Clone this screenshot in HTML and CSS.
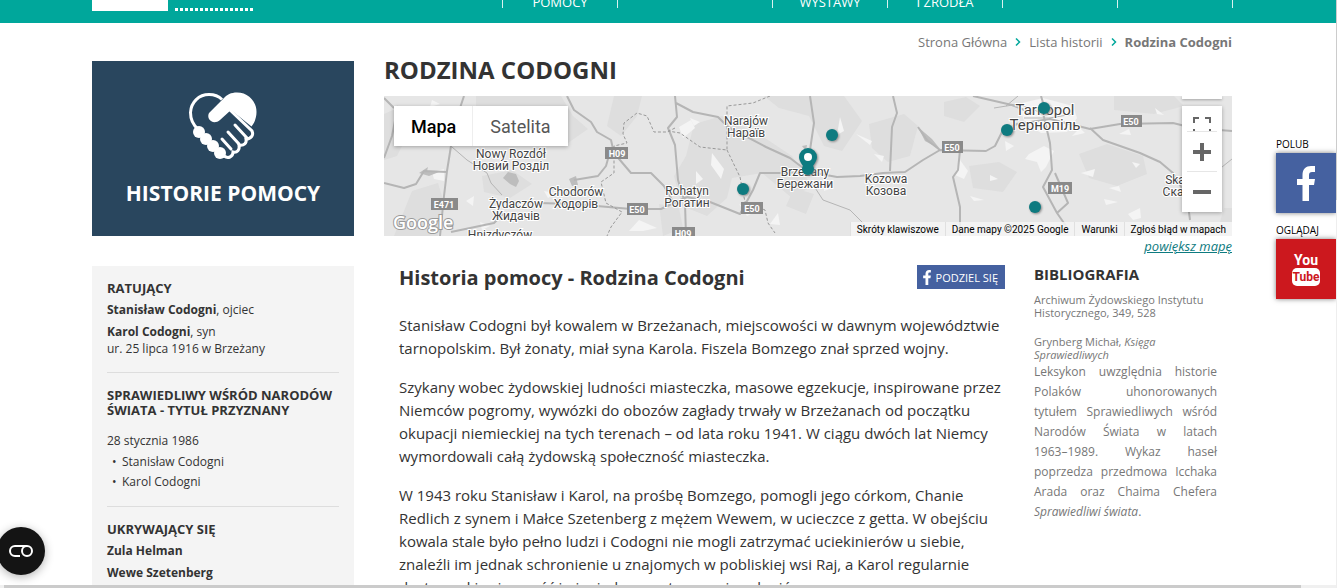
FILE: index.html
```html
<!DOCTYPE html>
<html lang="pl">
<head>
<meta charset="utf-8">
<title>Rodzina Codogni</title>
<link rel="stylesheet" href="styles.css">
</head>
<body>
<header class="topbar">
  <a class="logo" href="#" aria-label="Strona Główna"><span class="logo-box"></span><span class="logo-dots"></span></a>
  <nav class="menu">
    <a href="#">POMOCY</a>
    <a class="wide" href="#"></a>
    <a href="#">WYSTAWY</a>
    <a href="#">I ŹRÓDŁA</a>
    <a href="#"></a>
    <a href="#"></a>
  </nav>
</header>

<main class="page">
  <nav class="breadcrumb">
    <a href="#">Strona Główna</a>
    <svg class="chevron" viewBox="0 0 6 8"><path d="M1 0.5 4.5 4 1 7.5"/></svg>
    <a href="#">Lista historii</a>
    <svg class="chevron" viewBox="0 0 6 8"><path d="M1 0.5 4.5 4 1 7.5"/></svg>
    <strong>Rodzina Codogni</strong>
  </nav>

  <div class="columns">
    <aside class="side">
      <a class="tile" href="#">
        <svg class="hands" viewBox="0 0 70 68">
          <path class="outline" d="M10 37C4 32 2.500 26 2.500 20.500 3 10 11 2.500 21 2.500c6 0 10 2 13 5"/>
          <path class="fill" d="M21 21 35 7C39 2.500 43 .5 49 .5 60 .5 68.500 9 68.500 20c0 5-1.500 10-5 14.500L43 18l-11 10c-4 3.500-9 2.500-11-1-1-2-1-4 0-6z"/>
          <circle class="fill" cx="11" cy="40" r="6"/><circle class="fill" cx="18" cy="47" r="6"/><circle class="fill" cx="25" cy="54" r="6"/><circle class="fill" cx="32" cy="61" r="6"/>
          <path class="outline" d="m36 64c4 3 9 1 9-4 4 1 7-2 6-7 5 1 8-2 7-6 5 0 8-4 6-8L42 18"/>
          <path class="fingers" d="m34 47 9 10M40 40l11 12M47 33l12 13"/>
        </svg>
        <span>HISTORIE POMOCY</span>
      </a>
      <div class="facts">
        <section>
          <h2>RATUJĄCY</h2>
          <p><b>Stanisław Codogni</b>, ojciec</p>
          <p><b>Karol Codogni</b>, syn<br>ur. 25 lipca 1916 w Brzeżany</p>
        </section>
        <section>
          <h2>SPRAWIEDLIWY WŚRÓD NARODÓW ŚWIATA - TYTUŁ PRZYZNANY</h2>
          <p class="date">28 stycznia 1986</p>
          <ul><li>Stanisław Codogni</li><li>Karol Codogni</li></ul>
        </section>
        <section>
          <h2>UKRYWAJĄCY SIĘ</h2>
          <p><b>Zula Helman</b></p>
          <p><b>Wewe Szetenberg</b></p>
        </section>
      </div>
    </aside>

    <div class="content">
      <h1>RODZINA CODOGNI</h1>
      <div class="map">
        <svg class="map-canvas" viewBox="0 0 848 140" preserveAspectRatio="xMidYMin slice">
          <rect class="land" width="848" height="140"/>
          <g class="shade">
            <path d="M92 0h85l12 20 15 13-20 14-30-10-40 8-22-20z"/>
            <path d="M0 18 18 10l10 20-15 30-13 4zM28 95l26-8 6 20-6 33H10l10-25z"/>
            <path d="M230 0h28l-5 20-16 20-14-10z"/>
            <path d="m310 28 28-8 40 20 30 20 20 30-20 12-30-25-30 5-5 20-20 18-25-10-8-30 12-20z"/>
            <path d="m380 0h80l18 25-20 30-18-5-15-30-30-8z"/>
            <path d="m485 28 35-10 14 12-8 30-22 6-16-14zM585 70l30-4 18 10-14 20-30-4z"/>
            <path d="m695 58 28-10 36 12 4 18-30 12-28-8zM560 6l22-5 14 9-16 16-20-6z"/>
            <path d="m730 0h60l10 10-30 8-40-4zM98 80l30-6 20 14-22 14-26-6zM840 112h8v14h-12z"/>
            <path d="m410 92 20 6-8 20-20-8zM275 108l20 4 4 20-20 8z"/>
          </g>
          <g class="clear">
            <path d="m48 76 12-3v12l-10-2zM48 4l8 4-10 3zM82 105l8-5-1 10zM96 126l10 4-8 4zM150 65l-8 6 10 1zM160 95l12 2-8 5zM245 135l10-11 18 8-14 3zM295 31l12-7 4 8-12 10z"/>
            <path d="m328 57 12 16-3 10-10-14zM312 75l7 8-7 5zM306 22l10 4-6 4zM456 21l4 14-7 4zM472 38l16 7-2 4zM490 58l10 2-2 6zM440 89l8 3-8 3zM355 108l14 9-6 3zM386 128l8-11 2 12z"/>
            <path d="m645 58 15-8 10 5-8 16-5 5-4-10-12-3zM576 64l8 11-4 8-9-4zM586 100l14 4-10 1zM606 79l8 4-8 2zM697 77l14-4-2 8zM725 92l10-2 2 6zM744 118l12-6 1 10-8 2zM720 103l14 3-12 3zM735 38l10-5 2 6zM621 45l9 5-8 5zM688 40l8-8 5 5zM748 66l8 2-4 4zM771 12l9 7-7-1z"/>
            <path d="m634 8 25-6 30 8 4 12-10 14-26 1-16-10z"/>
          </g>
          <g class="park"><path d="m119 82 5-6 8 2 3 7-9 3zM128 82l7 3-3 6-6-3zM185 83l7-3 2 9-6 1zM35 77l9-6-1 4 12 1-10 4zM534 31l14 12 8 10-15-8zM418 50l5-1-1 6z"/></g>
          <g class="roads">
            <path d="M80 0 72 24 67 50 63 75 60 100 56 140M0 2l10 10M14 10 8 40 0 62M0 87l20 5 12-4 8-13 23 1"/>
            <path d="M183 0l7 14 17 12 6 10 14 8 3 13 17 20h20l13 13 8 14M227 52l-5 18-8 10-24 4M155 107l35 1 57 5 30 0 26-12"/>
            <path d="M67 136l43-9 10-10M291 0l2 21-9 11 7 17 3 35 7 23 1 33M292 7l17 9 25 5 10 10 38 20 24 11 17 13M426 0l4 27-4 27-2 21"/>
            <path d="M303 101l23 5 30 12 13-24 7-17 23 0 27-1 27 5 23-1 23-3 22-1 18-12 17-10 46 1 9-5 7-14 15-8 33-5 40 10 30-5 53-1 20 5 39 3"/>
            <path d="M509 0l4 17-5 14-2 44M534 31l9 13 13 10M706 32l13 12 37 13 20 9 13 11 14 24 3 23M659 17l7 30 2 27-9 17 14 26 11-10-13-30M673 117l9 13M576 54l-2 20-5 7 7 30v29M589 0l39 9 22 9M657 0l3 10"/>
          </g>
          <g class="thin"><path d="M68 51l15 13 20 13 4 10 11 12M426 84l13 20 27 10 20 20M610 12l25-4 20 8M622 10l12-10M690 18l-25 4-25 0M838 71l10-8"/></g>
          <g class="border"><path d="M291 32l-8 4h-13l-7-16-10-3-13 10-1 11 4 9-13 3v27l-13 9 5 21 16 9-11 15-4 9M386 0l-17 7-26 3v44l-27-3-20-14-12-2M343 54l13 27 5 25 20 8 3 13 7 10"/></g>
          <g class="shields">
            <rect x="47" y="102" width="27" height="12"/><rect x="221" y="51" width="23" height="12"/><rect x="243" y="107" width="21" height="12"/><rect x="357" y="106" width="22" height="12"/><rect x="288" y="131" width="23" height="12"/><rect x="558" y="45" width="21" height="12"/><rect x="737" y="19" width="21" height="12"/><rect x="664" y="86" width="24" height="12"/>
          </g>
          <g class="shield-text">
            <text x="60" y="112">E471</text><text x="233" y="61">H09</text><text x="253" y="117">E50</text><text x="368" y="116">E50</text><text x="299" y="141">H09</text><text x="568" y="55">E50</text><text x="747" y="29">E50</text><text x="676" y="96">M19</text>
          </g>
          <g class="towns">
            <text x="127" y="62">Nowy Rozdół</text><text x="127" y="74">Новий Розділ</text>
            <text x="192" y="100">Chodorów</text><text x="192" y="112">Ходорів</text>
            <text x="132" y="112">Żydaczów</text><text x="132" y="124">Жидачів</text>
            <text x="116" y="143">Hnizdyczów</text>
            <text x="362" y="29">Narajów</text><text x="362" y="41">Нараїв</text>
            <text x="303" y="99">Rohatyn</text><text x="303" y="111">Рогатин</text>
            <text x="421" y="80">Brzeżany</text><text x="421" y="92">Бережани</text>
            <text x="502" y="87">Kozowa</text><text x="502" y="99">Козова</text>
            <text x="791" y="88">Ska</text><text x="789" y="100">Ска</text>
          </g>
          <g class="city"><text x="661" y="19">Tarnopol</text><text x="661" y="34">Тернопіль</text></g>
          <text class="google" x="9" y="133">Google</text>
          <g class="pins">
            <circle cx="448" cy="39" r="6"/><circle cx="359" cy="93" r="6"/><circle cx="660" cy="12" r="6"/><circle cx="623" cy="34" r="6"/><circle cx="651" cy="111" r="6"/>
            <path d="M424 52a9 9 0 0 1 9 9c0 5-5 9-6 13h-6c-1-4-6-8-6-13a9 9 0 0 1 9-9z"/>
            <circle class="pin-hole" cx="424" cy="61" r="4"/>
            <circle cx="424" cy="73" r="6"/>
          </g>
        </svg>
        <div class="map-types"><button class="active" type="button">Mapa</button><button type="button">Satelita</button></div>
        <div class="map-stub"></div>
        <div class="map-tools">
          <button type="button" aria-label="Pełny ekran"><svg viewBox="0 0 18 14"><path class="corner" d="M1 6V1h5M12 1h5v5M1 12v2M17 12v2"/></svg></button>
          <button type="button" aria-label="Powiększ"><svg viewBox="0 0 18 18"><path d="M9 0v18M0 9h18"/></svg></button>
          <button type="button" aria-label="Pomniejsz"><svg viewBox="0 0 18 18"><path d="M0 9h18"/></svg></button>
        </div>
        <div class="map-legal"><button type="button">Skróty klawiszowe</button><span>Dane mapy ©2025 Google</span><a href="#">Warunki</a><a href="#">Zgłoś błąd w mapach</a></div>
      </div>
      <div class="enlarge"><a href="#">powiększ mapę</a></div>

      <div class="story">
        <article>
          <div class="story-head">
            <h2>Historia pomocy - Rodzina Codogni</h2>
            <a class="share" href="#"><svg viewBox="0 0 18 35"><path d="M5.500 35V19H0v-6h5.500V9C5.500 3 9 0 14 0h4v6h-3c-2 0-3 1-3 3v4h6l-1 6h-5v16z"/></svg>PODZIEL SIĘ</a>
          </div>
          <p>Stanisław Codogni był kowalem w Brzeżanach, miejscowości w dawnym województwie tarnopolskim. Był żonaty, miał syna Karola. Fiszela Bomzego znał sprzed wojny.</p>
          <p>Szykany wobec żydowskiej ludności miasteczka, masowe egzekucje, inspirowane przez Niemców pogromy, wywózki do obozów zagłady trwały w Brzeżanach od początku okupacji niemieckiej na tych terenach – od lata roku 1941. W ciągu dwóch lat Niemcy wymordowali całą żydowską społeczność miasteczka.</p>
          <p>W 1943 roku Stanisław i Karol, na prośbę Bomzego, pomogli jego córkom, Chanie Redlich z synem i Małce Szetenberg z mężem Wewem, w ucieczce z getta. W obejściu kowala stale było pełno ludzi i Codogni nie mogli zatrzymać uciekinierów u siebie, znaleźli im jednak schronienie u znajomych w pobliskiej wsi Raj, a Karol regularnie dostarczał im żywność i pieniądze na utrzymanie w kryjówce.</p>
        </article>
        <aside class="biblio">
          <h2>BIBLIOGRAFIA</h2>
          <p class="source">Archiwum Żydowskiego Instytutu Historycznego, 349, 528</p>
          <p class="source">Grynberg Michał, <i>Księga Sprawiedliwych</i></p>
          <p class="note">Leksykon uwzględnia historie Polaków uhonorowanych tytułem Sprawiedliwych wśród Narodów Świata w latach <span class="years">1963–1989.</span> Wykaz haseł poprzedza przedmowa Icchaka Arada oraz Chaima Chefera <i>Sprawiedliwi świata</i>.</p>
        </aside>
      </div>
    </div>
  </div>
</main>

<div class="social">
  <span>POLUB</span>
  <a class="fb" href="#" aria-label="Facebook"><svg viewBox="0 0 18 35"><path d="M5.500 35V19H0v-6h5.500V9C5.500 3 9 0 14 0h4v6h-3c-2 0-3 1-3 3v4h6l-1 6h-5v16z"/></svg></a>
  <span>OGLĄDAJ</span>
  <a class="yt" href="#" aria-label="YouTube"><b>You</b><b class="tube">Tube</b></a>
</div>

<button class="consent" type="button" aria-label="Ustawienia plików cookie"><svg viewBox="0 0 24 12"><path d="M11 11H6A5 5 0 0 1 6 1h12"/><circle cx="18" cy="6" r="5"/></svg></button>
<div class="scroll-x"><div></div></div>
<div class="scroll-y"><div></div></div>
</body>
</html>
```
FILE: styles.css
```css
* { box-sizing: border-box; }
html, body { height: 100%; }
body { margin: 0; overflow: hidden; position: relative; background: #fff; color: #333; font-family: "Open Sans", "Noto Sans", sans-serif; font-size: 12px; }
a { color: inherit; text-decoration: none; }
h1, h2, p, ul { margin: 0; padding: 0; }
button { font-family: inherit; border: 0; padding: 0; background: none; cursor: pointer; }

.topbar { display: flex; justify-content: space-between; height: 23px; padding: 0 104px 0 92px; background: #00a79b; color: #fff; overflow: hidden; }
.logo { display: flex; gap: 7px; height: 11px; }
.logo-box { width: 76px; background: #fff; }
.logo-dots { width: 78px; height: 3px; align-self: flex-end; background: repeating-linear-gradient(90deg, #fff 0 3px, transparent 3px 5px); }
.menu { display: flex; height: 8px; border-left: 1px solid #d9f2f0; }
.menu a { display: flex; align-items: flex-end; justify-content: center; width: 115px; border-right: 1px solid #d9f2f0; font-size: 13px; line-height: 12px; }
.menu .wide { width: 155px; }

.page { padding: 0 105px 0 92px; }
.breadcrumb { display: flex; align-items: center; justify-content: flex-end; height: 38px; color: #777; font-size: 13px; }
.chevron { width: 6px; height: 8px; margin: 0 8px; fill: none; stroke: #00a79b; stroke-width: 1.5; }
.columns { display: flex; gap: 30px; align-items: flex-start; }
.side { flex: 0 0 262px; }
.tile { display: flex; flex-direction: column; align-items: center; height: 175px; padding-top: 31px; background: #29465e; color: #fff; font-size: 21px; line-height: 28px; font-weight: 700; }
.tile span { margin-top: 19px; }
.hands { width: 70px; height: 68px; }
.hands .fill { fill: #fff; }
.hands .outline { fill: none; stroke: #fff; stroke-width: 3; }
.hands .fingers { stroke: #fff; stroke-width: 3; stroke-linecap: round; }

.facts { margin-top: 30px; padding: 15px 15px 60px; background: #f4f4f4; line-height: 17px; }
.facts section { padding-bottom: 15px; margin-bottom: 15px; border-bottom: 1px solid #ddd; }
.facts section:last-child { border: 0; }
.facts h2 { font-size: 13px; line-height: 15px; margin-bottom: 5px; }
.facts p { margin-bottom: 5px; }
.facts p:last-child { margin-bottom: 0; }
.facts .date { margin: 14px 0 3px; }
.facts ul { list-style: none; padding-left: 5px; line-height: 20px; margin-bottom: -1px; }
.facts li { display: flex; gap: 6px; }
.facts li::before { content: "•"; width: 4px; }

.content { flex: 1; min-width: 0; }
h1 { font-size: 24px; line-height: 18px; margin-bottom: 17px; }

.map { position: relative; height: 140px; overflow: hidden; font-family: Roboto, sans-serif; }
.map-canvas { display: block; width: 100%; height: 140px; }
.land { fill: #e6e6e6; }
.shade { fill: #dedede; }
.clear { fill: #f4f4f4; }
.park { fill: #bdbdbd; }
.roads, .thin, .border { fill: none; stroke: #b5b5b5; stroke-width: 2; stroke-linejoin: round; }
.thin { stroke-width: 1; }
.border { stroke: #999; stroke-width: 1; stroke-dasharray: 3 2; }
.shields { fill: #8a8a8a; }
.shield-text { fill: #fff; font-size: 9px; font-weight: 700; text-anchor: middle; }
.towns, .city { fill: #444; font-size: 12px; text-anchor: middle; stroke: #fff; stroke-width: 2; paint-order: stroke; }
.city { font-size: 15px; }
.google { font-family: "Open Sans", sans-serif; font-size: 18px; font-weight: 600; fill: #fff; stroke: #999; stroke-width: 2; paint-order: stroke; }
.pins { fill: #0e7b80; filter: drop-shadow(1px 1px 1px #888); }
.pins .pin-hole { fill: #fff; }

.map-types { position: absolute; left: 10px; top: 10px; display: flex; height: 40px; background: #fff; box-shadow: 0 1px 4px rgba(0,0,0,.3); }
.map-types button { font-size: 18px; color: #565656; padding: 0 17px; }
.map-types .active { color: #000; font-weight: 500; border-right: 1px solid #eee; padding-right: 16px; }
.map-stub { position: absolute; top: 0; right: 10px; width: 40px; height: 3px; background: #fff; box-shadow: 0 1px 3px rgba(0,0,0,.3); }
.map-tools { position: absolute; top: 10px; right: 10px; display: flex; flex-direction: column; width: 40px; height: 106px; background: #fff; box-shadow: 0 1px 4px rgba(0,0,0,.3); }
.map-tools button { display: flex; align-items: center; justify-content: center; height: 40px; margin: 0 5px; border-top: 1px solid #e6e6e6; }
.map-tools button:first-child { height: 25px; border: 0; padding-top: 11px; }
.map-tools svg { width: 18px; flex: none; fill: none; stroke: #666; stroke-width: 4; }
.map-tools .corner { stroke-width: 2; }
.map-legal { position: absolute; right: 0; bottom: 0; display: flex; height: 14px; font-size: 10px; background: rgba(245,245,245,.85); color: #000; }
.map-legal > * { font-size: 10px; line-height: 16px; padding: 0 6px; border-left: 1px solid #e0e0e0; color: #000; }

.enlarge { height: 21px; line-height: 21px; text-align: right; font-size: 13px; font-style: italic; color: #0e7b80; }
.enlarge a { text-decoration: underline; }

.story { display: flex; gap: 29px; padding: 8px 15px 0; }
article { flex: 1; font-size: 15px; line-height: 23px; }
article p { margin-bottom: 16px; }
.story-head { display: flex; justify-content: space-between; align-items: center; height: 24px; margin-bottom: 25px; }
.story-head h2 { font-size: 20px; line-height: 24px; padding-top: 2px; }
.share { display: flex; align-items: center; gap: 5px; height: 24px; padding: 0 7px 0 6px; background: #4561a0; color: #fff; font-size: 11px; }
.share svg { width: 8px; height: 15px; fill: #fff; }
.biblio { flex: 0 0 183px; color: #777; }
.biblio h2 { font-size: 15px; line-height: 18px; margin-bottom: 10px; color: #333; }
.source { font-size: 11px; line-height: 13px; margin-bottom: 16px; }
.source + .source { margin-bottom: 1px; }
.note { line-height: 20px; text-align: justify; }
.years { white-space: nowrap; }

.social { position: absolute; right: 1px; top: 136px; width: 60px; display: flex; flex-direction: column; color: #000; font-size: 10px; line-height: 17px; }
.social a { display: flex; flex-direction: column; align-items: center; justify-content: center; height: 60px; margin-bottom: 9px; box-shadow: 0 0 5px rgba(0,0,0,.5); }
.fb { background: #4561a0; }
.fb svg { width: 18px; height: 35px; fill: #fff; }
.social .yt { background: #cc181e; color: #fff; font-family: Roboto, sans-serif; font-size: 14px; line-height: 15px; }
.yt .tube { padding: 0 1px; border-radius: 5px; background: #fff; color: #cc181e; font-size: 12px; line-height: 18px; }

.consent { position: absolute; left: -3px; bottom: 13px; width: 48px; height: 48px; border-radius: 50%; background: #141414; box-shadow: 0 2px 10px rgba(0,0,0,.3); display: flex; align-items: center; justify-content: center; }
.consent svg { width: 24px; height: 12px; fill: none; stroke: #fff; stroke-width: 2; }
.scroll-x { position: absolute; left: 0; right: 0; bottom: 0; height: 3px; padding: 0 36px 0 4px; background: #f0f0f0; }
.scroll-x div { height: 3px; background: #cbcbcb; }
.scroll-y { position: absolute; right: 0; top: 0; width: 1px; height: 100%; background: #eee; }
.scroll-y div { height: 34%; background: #ccc; }
```
